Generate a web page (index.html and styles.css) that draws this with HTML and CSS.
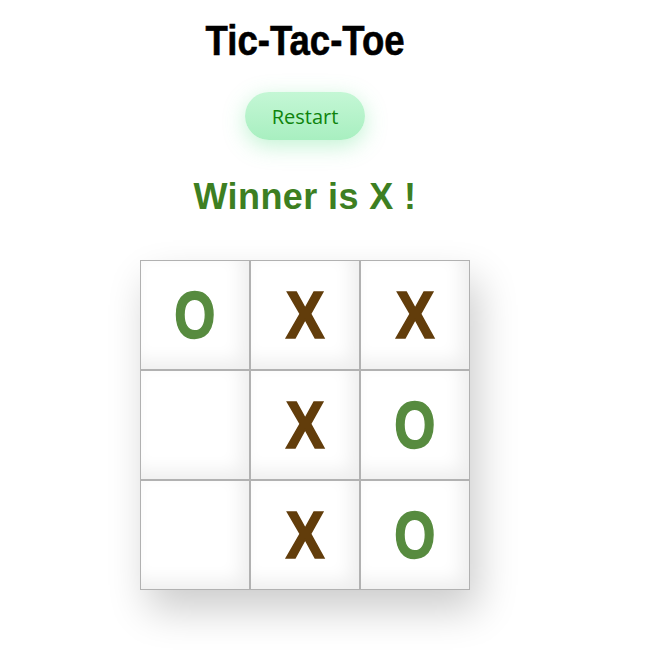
FILE: index.html
```html
<!DOCTYPE html>
<html>
<head>
<meta charset="utf-8">
<link rel="stylesheet" href="styles.css">
</head>
<body>
<div class="app">
  <h1 class="title"><span class="narrow">Tic-Tac-Toe</span></h1>
  <button class="restart">Restart</button>
  <h2 class="status">Winner is X !</h2>
  <div class="board">
    <div class="cell o"><span class="mark">O</span></div>
    <div class="cell x"><span class="mark">X</span></div>
    <div class="cell x"><span class="mark">X</span></div>
    <div class="cell"></div>
    <div class="cell x"><span class="mark">X</span></div>
    <div class="cell o"><span class="mark">O</span></div>
    <div class="cell"></div>
    <div class="cell x"><span class="mark">X</span></div>
    <div class="cell o"><span class="mark">O</span></div>
  </div>
</div>
</body>
</html>
```

FILE: styles.css
```css
html, body {
  margin: 0;
  padding: 0;
  background: #ffffff;
}
.app {
  width: 610px;
  padding-bottom: 60px;
  display: flex;
  flex-direction: column;
  align-items: center;
  font-family: "Liberation Sans", Arial, sans-serif;
}
.title {
  margin: 16px 0 0 0;
  font-size: 43px;
  line-height: 48px;
  font-weight: bold;
  color: #000;
}
.narrow {
  display: inline-block;
  transform: scaleX(0.85);
  -webkit-text-stroke: 0.6px #000;
}
.restart {
  margin-top: 28px;
  width: 120px;
  height: 48px;
  border: none;
  border-radius: 24px;
  background: linear-gradient(180deg, #c4f7d5 0%, #a8efc0 100%);
  color: #0f840d;
  font-family: "Open Sans", "Noto Sans", sans-serif;
  font-size: 20px;
  box-shadow: 0 6px 22px rgba(80, 220, 130, 0.35);
  padding: 0;
}
.status {
  margin: 37px 0 0 0;
  font-size: 36px;
  line-height: 40px;
  font-weight: bold;
  letter-spacing: 0.4px;
  color: #3d7f22;
}
.board {
  margin-top: 43px;
  display: grid;
  grid-template-columns: repeat(3, 110px);
  grid-template-rows: repeat(3, 110px);
  box-shadow: 8px 20px 38px rgba(0, 0, 0, 0.2);
}
.cell {
  box-sizing: border-box;
  border: 1px solid #b1b1b1;
  background: #fff;
  box-shadow: inset -8px -8px 18px rgba(0, 0, 0, 0.07);
  display: flex;
  align-items: center;
  justify-content: center;
  font-size: 66px;
  font-weight: bold;
}
.mark {
  display: inline-block;
  transform: scaleX(0.88);
  -webkit-text-stroke: 1.6px currentColor;
}
.cell.o .mark { transform: scaleX(0.8); }
.cell.o { color: #578b3f; }
.cell.x { color: #623d0b; }
```
